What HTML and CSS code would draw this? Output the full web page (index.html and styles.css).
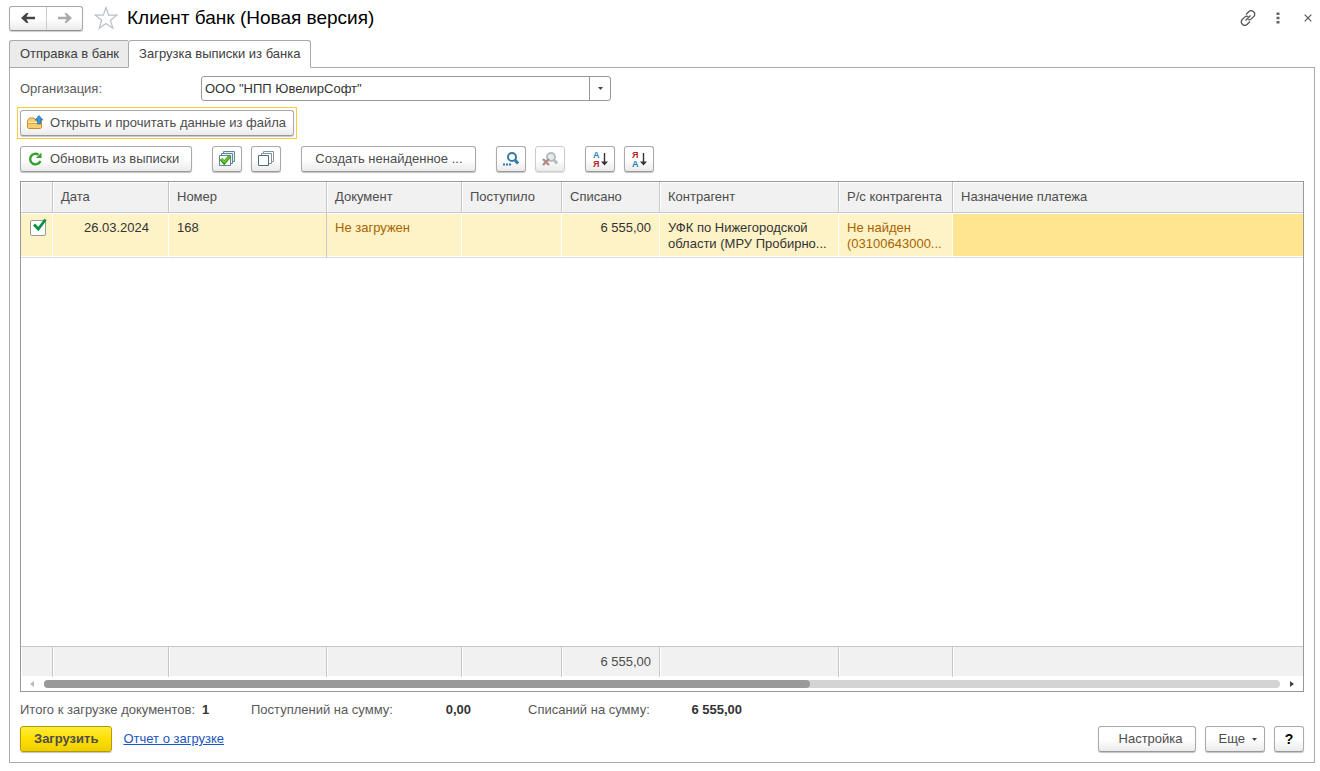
FILE: index.html
```html
<!DOCTYPE html>
<html lang="ru">
<head>
<meta charset="utf-8">
<title>Клиент банк (Новая версия)</title>
<link rel="stylesheet" href="styles.css">
</head>
<body>
<div class="page">
  <header class="header">
    <div class="nav">
      <button class="nav-btn" type="button" aria-label="Назад"><svg width="16" height="12" viewBox="0 0 16 12"><path d="M1 6l5.500-5h2L6.500 4.700H15v2.600H6.500L8.500 11h-2z" fill="#444"/></svg></button>
      <button class="nav-btn" type="button" aria-label="Вперед"><svg width="16" height="12" viewBox="0 0 16 12"><path d="M15 6L9.500 1h-2l2 3.800H1v2.400h8.500L7.500 11h2z" fill="#aaa"/></svg></button>
    </div>
    <button class="plain star" type="button" aria-label="В избранное"><svg width="24" height="24" viewBox="0 0 24 24"><path d="M12 1.500l2.700 7.700h8.200l-6.500 5 2.400 8-6.800-4.800-6.800 4.800 2.400-8-6.500-5h8.200z" fill="#fff" stroke="#b9c0c6" stroke-width="1.200"/></svg></button>
    <h1 class="title">Клиент банк (Новая версия)</h1>
    <div class="tools">
      <button class="plain" type="button" aria-label="Ссылка"><svg width="16" height="16" viewBox="0 0 16 16"><g fill="none" stroke="#555" stroke-width="1.300"><path d="M6 4.500l2.700-2.700c1.300-1.300 3.400-1.400 4.700-.2 1.800 1.200 1.700 3.500.4 4.900l-2.500 2.400c-1 1-2.300 1.200-3.500.6"/><path d="M10 11.500l-2.700 2.700c-1.300 1.300-3.400 1.400-4.700.2-1.800-1.200-1.700-3.500-.4-4.900l2.500-2.400c1-1 2.300-1.200 3.500-.6M5.500 10.500l5-5"/></g></svg></button>
      <button class="plain" type="button" aria-label="Меню"><svg width="4" height="12" viewBox="0 0 4 12"><path d="M.5.500h3v2.500h-3zM.5 4.700h3v2.500h-3zM.5 8.900h3v2.500h-3z" fill="#666"/></svg></button>
      <button class="plain" type="button" aria-label="Закрыть"><svg width="8" height="8" viewBox="0 0 8 8"><path d="M.7.700l6.600 6.600M7.300.700L.7 7.300" stroke="#555" stroke-width="1.200"/></svg></button>
    </div>
  </header>

  <div class="tabs" role="tablist">
    <button class="tab" role="tab" type="button" aria-selected="false">Отправка в банк</button>
    <button class="tab tab-active" role="tab" type="button" aria-selected="true">Загрузка выписки из банка</button>
  </div>

  <main class="panel">
    <div class="org">
      <label class="org-label" for="org">Организация:</label>
      <div class="combo">
        <input class="combo-input" id="org" type="text" value='ООО "НПП ЮвелирСофт"'>
        <button class="combo-btn" type="button" aria-label="Выбрать"><svg width="5" height="3" viewBox="0 0 5 3"><path d="M0 0h5L2.500 3z" fill="#444"/></svg></button>
      </div>
    </div>

    <div class="focus">
      <button class="btn btn-open" type="button"><svg width="16" height="16" viewBox="0 0 16 16"><path d="M1.500 13.500l-1-1V5.500l2-2.500h4.500l2 2.500h5.500v7l-1 1z" fill="#f8cf70" stroke="#c98a36"/><path d="M1 7.500h13" stroke="#fff0bd"/><path d="M1 8.500h13" stroke="#dca348"/><path d="M10.500 9V5H8L12 .500l4 4.500h-2.500v4z" fill="#3494dc" stroke="#1f6fae" stroke-width=".7"/></svg>Открыть и прочитать данные из файла</button>
    </div>

    <div class="toolbar">
      <button class="btn btn-refresh" type="button"><svg width="16" height="16" viewBox="0 0 16 16"><path d="M13.400 10A5.300 5.300 0 1 1 11.500 3.700" fill="none" stroke="#35a02f" stroke-width="2.400"/><path d="M14.500 1.500V7H9z" fill="#35a02f"/></svg>Обновить из выписки</button>
      <div class="group">
        <button class="btn icon" type="button" aria-label="Отметить все"><svg width="16" height="16" viewBox="0 0 16 16"><g fill="#e8f0f0" stroke="#5f8796"><path d="M4.500.500h11v10h-11z"/><path d="M2.500 2.500h11v10h-11z"/><path d="M.5 4.500h11v10H.500z" fill="#fff"/></g><path d="M2 8l3.200 3.700L11 5" fill="none" stroke="#2f8d15" stroke-width="3.400"/><path d="M2.500 8.200l2.800 3L10.700 5.300" fill="none" stroke="#64cc36" stroke-width="1.800"/></svg></button>
        <button class="btn icon" type="button" aria-label="Снять отметки"><svg width="16" height="16" viewBox="0 0 16 16"><g fill="#fff" stroke="#8195a5"><path d="M5.500.500h10v10h-10z"/><path d="M3.500 2.500h10v10h-10z"/><path d="M.5 4.500h10v10H.500z" stroke="#526b80"/></g></svg></button>
      </div>
      <button class="btn btn-create" type="button">Создать ненайденное ...</button>
      <div class="group">
        <button class="btn icon" type="button" aria-label="Найти"><svg width="16" height="16" viewBox="0 0 16 16"><circle cx="9" cy="6" r="4" fill="#fff" stroke="#347ba9" stroke-width="2"/><path d="M11.500 8.500l3.500 4" stroke="#347ba9" stroke-width="3"/><path d="M0 12.500h2v2H0zM3 12.500h2v2H3zM6 12.500h2v2H6z" fill="#2876ad"/></svg></button>
        <button class="btn icon btn-off" type="button" aria-label="Отменить поиск" disabled><svg width="16" height="16" viewBox="0 0 16 16"><circle cx="9" cy="6" r="4" fill="#e5eaed" stroke="#b4bdc2" stroke-width="2"/><path d="M11.500 8.500l3.500 4" stroke="#b4bdc2" stroke-width="3"/><path d="M1 8l6 6M7 8l-6 6" stroke="#b08a84" stroke-width="2.400"/></svg></button>
      </div>
      <div class="group">
        <button class="btn icon" type="button" aria-label="Сортировать по возрастанию"><svg class="sort" width="16" height="18" viewBox="0 0 16 18"><text x="1" y="8" fill="#2a7fc0">А</text><text x="1" y="17" fill="#bd1f24">Я</text><path d="M12.500 3v10" stroke="#333" stroke-width="1.400"/><path d="M9 11.500h7l-3.500 4z" fill="#333"/></svg></button>
        <button class="btn icon" type="button" aria-label="Сортировать по убыванию"><svg class="sort" width="16" height="18" viewBox="0 0 16 18"><text x="1" y="8" fill="#bd1f24">Я</text><text x="1" y="17" fill="#2a7fc0">А</text><path d="M12.500 3v10" stroke="#333" stroke-width="1.400"/><path d="M9 11.500h7l-3.500 4z" fill="#333"/></svg></button>
      </div>
    </div>

    <div class="list">
      <div class="list-body">
        <table class="grid">
          <colgroup><col class="c-check"><col class="c-date"><col class="c-num"><col class="c-doc"><col class="c-in"><col class="c-out"><col class="c-agent"><col class="c-acc"><col></colgroup>
          <thead>
            <tr><th></th><th>Дата</th><th>Номер</th><th>Документ</th><th>Поступило</th><th>Списано</th><th>Контрагент</th><th>Р/с контрагента</th><th>Назначение платежа</th></tr>
          </thead>
          <tbody>
            <tr class="row">
              <td><label class="check"><input type="checkbox" checked aria-label="Загружать документ"><svg class="tick" width="18" height="16" viewBox="0 0 18 16"><path d="M4 6.500l4.300 4.500L15.500 1.500" fill="none" stroke="#099245" stroke-width="2.800"/></svg></label></td>
              <td class="center">26.03.2024</td>
              <td class="fixed-end">168</td>
              <td class="warn">Не загружен</td>
              <td></td>
              <td class="right">6 555,00</td>
              <td>УФК по Нижегородской<br>области (МРУ Пробирно...</td>
              <td class="warn">Не найден<br>(03100643000...</td>
              <td class="current"></td>
            </tr>
            <tr class="rest"><td colspan="9"></td></tr>
          </tbody>
          <tfoot>
            <tr><td></td><td></td><td></td><td></td><td></td><td class="right">6 555,00</td><td></td><td></td><td></td></tr>
          </tfoot>
        </table>
      </div>
      <div class="scroll">
        <svg width="4" height="6" viewBox="0 0 4 6"><path d="M4 0v6L0 3z" fill="#bbb"/></svg>
        <div class="track"><div class="thumb"></div></div>
        <svg width="4" height="6" viewBox="0 0 4 6"><path d="M0 0v6l4-3z" fill="#444"/></svg>
      </div>
    </div>

    <div class="totals">
      <span class="t-count">Итого к загрузке документов:</span><b class="v-count">1</b>
      <span class="t-in">Поступлений на сумму:</span><b class="v-in">0,00</b>
      <span class="t-out">Списаний на сумму:</span><b class="v-out">6 555,00</b>
    </div>

    <div class="footer">
      <button class="btn btn-main" type="button">Загрузить</button>
      <a class="link" href="#">Отчет о загрузке</a>
      <div class="footer-end">
        <button class="btn btn-settings" type="button">Настройка</button>
        <button class="btn btn-more" type="button">Еще <svg width="5" height="3" viewBox="0 0 5 3"><path d="M0 0h5L2.500 3z" fill="#444"/></svg></button>
        <button class="btn icon btn-help" type="button">?</button>
      </div>
    </div>
  </main>
</div>
</body>
</html>
```

FILE: styles.css
```css
* { box-sizing: border-box; }
body { margin: 0; background: #fff; color: #4d4d4d; font: 13px/16px "Liberation Sans", Arial, sans-serif; }
button, input { font: inherit; color: inherit; margin: 0; }
svg { display: block; flex: none; }
.page { display: flex; flex-direction: column; height: 100vh; padding: 0 5px 8px 9px; }

.header { display: flex; align-items: center; flex: none; height: 40px; padding: 0 3px 4px 0; }
.nav { display: flex; height: 25px; border: 1px solid #a8a8a8; border-bottom-color: #8f8f8f; border-radius: 3px; background: linear-gradient(#fff 50%, #ebebeb); box-shadow: 0 1px 1px #ccc; }
.nav-btn { display: flex; align-items: center; justify-content: center; width: 36px; padding: 0; border: 0; background: none; }
.nav-btn + .nav-btn { border-left: 1px solid #ccc; }
.plain { padding: 0; border: 0; background: none; }
.star { margin: 0 9px 0 11px; }
.title { margin: 0; color: #000; font-size: 19px; line-height: 24px; font-weight: 400; }
.tools { display: flex; align-items: center; gap: 20px; margin-left: auto; }
.tools .plain:last-child { margin-left: 4px; }

.tabs { display: flex; flex: none; height: 28px; margin-bottom: -1px; z-index: 1; }
.tab { height: 28px; padding: 0 9px 0 10px; border: 1px solid #aaa; border-right: 0; border-radius: 3px 0 0 0; background: #ebebeb; color: #404040; }
.tab-active { padding-right: 10px; border-right: 1px solid #aaa; border-bottom-color: #fff; border-radius: 3px 3px 0 0; background: #fff; }

.panel { display: flex; flex: 1; flex-direction: column; min-height: 0; padding: 8px 10px 10px; border: 1px solid #aaa; }
.org { display: flex; align-items: center; flex: none; }
.org-label { width: 181px; color: #595959; }
.combo { display: flex; width: 410px; height: 25px; border: 1px solid #999; border-radius: 3px; }
.combo-input { flex: 1; min-width: 0; padding: 0 3px; border: 0; background: none; color: #333; outline: 0; }
.combo-btn { display: flex; align-items: center; justify-content: center; width: 21px; padding: 0; border: 0; border-left: 1px solid #999; background: none; }

.focus { align-self: flex-start; flex: none; margin: 6px 0 0 -3px; padding: 2px; border: 1px solid #f5cd3c; }
.btn { display: flex; align-items: center; height: 26px; padding: 0 12px; border: 1px solid #aaa; border-bottom-color: #999; border-radius: 3px; background: linear-gradient(#fff 50%, #ebebeb); box-shadow: 0 1px 1px #c4c4c4; color: #4d4d4d; white-space: nowrap; }
.btn-open, .btn-refresh { gap: 7px; padding: 0 12px 0 6px; }
.btn-open { padding-right: 7px; }
.btn-create { padding-left: 13px; }
.icon { justify-content: center; width: 30px; padding: 0; }
.btn-off { border-color: #ccc; box-shadow: 0 1px 1px #ddd; }
.toolbar { display: flex; flex: none; gap: 20px; margin-top: 7px; }
.group { display: flex; gap: 9px; }
.sort { font: bold 9px "Liberation Sans", Arial, sans-serif; }

.list { display: flex; flex: 1; flex-direction: column; min-height: 160px; margin-top: 9px; border: 1px solid #999; }
.list-body { flex: 1; min-height: 0; }
.grid { width: 100%; height: 100%; table-layout: fixed; border-collapse: separate; border-spacing: 0; }
.c-check { width: 32px; }
.c-date { width: 116px; }
.c-num { width: 158px; }
.c-doc { width: 135px; }
.c-in { width: 100px; }
.c-out { width: 98px; }
.c-agent { width: 179px; }
.c-acc { width: 114px; }
.grid th, .grid td { padding: 0 8px; text-align: left; font-weight: 400; white-space: nowrap; }
.grid th, .grid tfoot td { height: 31px; border-right: 1px solid #c8c8c8; background: #f1f1f1; box-shadow: inset 1px 1px #fff; }
.grid th { border-bottom: 1px solid #c8c8c8; }
.grid tfoot td { border-top: 1px solid #c8c8c8; box-shadow: inset 1px -1px #fff; }
.grid th:last-child, .grid tfoot td:last-child { border-right: 0; }
.grid .row td { height: 45px; padding-top: 7px; border-right: 1px solid #fff; border-bottom: 1px solid #ddd; background: #fef2c7; box-shadow: inset 0 1px #fff, inset 0 -1px #fff; color: #333; vertical-align: top; }
.grid .row .fixed-end { border-right-color: #c8c8c8; }
.grid .row .warn { color: #a86400; }
.grid .row .current { border-right: 0; background: #ffe590; }
.grid .right { text-align: right; }
.grid .center { padding-left: 20px; text-align: center; }
.grid .rest td { padding: 0; }
.check { position: relative; display: block; width: 16px; height: 16px; margin-left: 1px; }
.check input { display: block; width: 16px; height: 16px; margin: 0; border: 1px solid #999; border-radius: 2px; background: #fff; appearance: none; }
.tick { position: absolute; left: 0; top: -2px; }

.scroll { display: flex; align-items: center; justify-content: space-between; flex: none; height: 14px; padding: 0 9px; }
.track { flex: 1; height: 8px; margin: 0 10px; border-radius: 4px; background: #d4d4d4; }
.thumb { width: 62%; height: 8px; border-radius: 4px; background: #999; }

.totals { display: flex; flex: none; margin: 10px 0 8px; color: #595959; }
.totals b { color: #333; }
.t-count { width: 182px; }
.v-count { width: 49px; }
.t-in { width: 150px; }
.v-in { width: 70px; margin-right: 57px; text-align: right; }
.t-out { width: 150px; }
.v-out { width: 64px; text-align: right; }

.footer { display: flex; align-items: center; flex: none; gap: 11px; }
.btn-main { padding: 0 13px; border-color: #b59b00; background: linear-gradient(#ffec3d, #ffdf00 50%, #edcf00); font-weight: 700; }
.link { color: #1a55c0; }
.footer-end { display: flex; gap: 9px; margin-left: auto; }
.btn-settings { padding-left: 20px; }
.btn-more { gap: 7px; padding: 0 7px 0 13px; }
.btn-help { color: #000; font-size: 14px; font-weight: 700; }
```
